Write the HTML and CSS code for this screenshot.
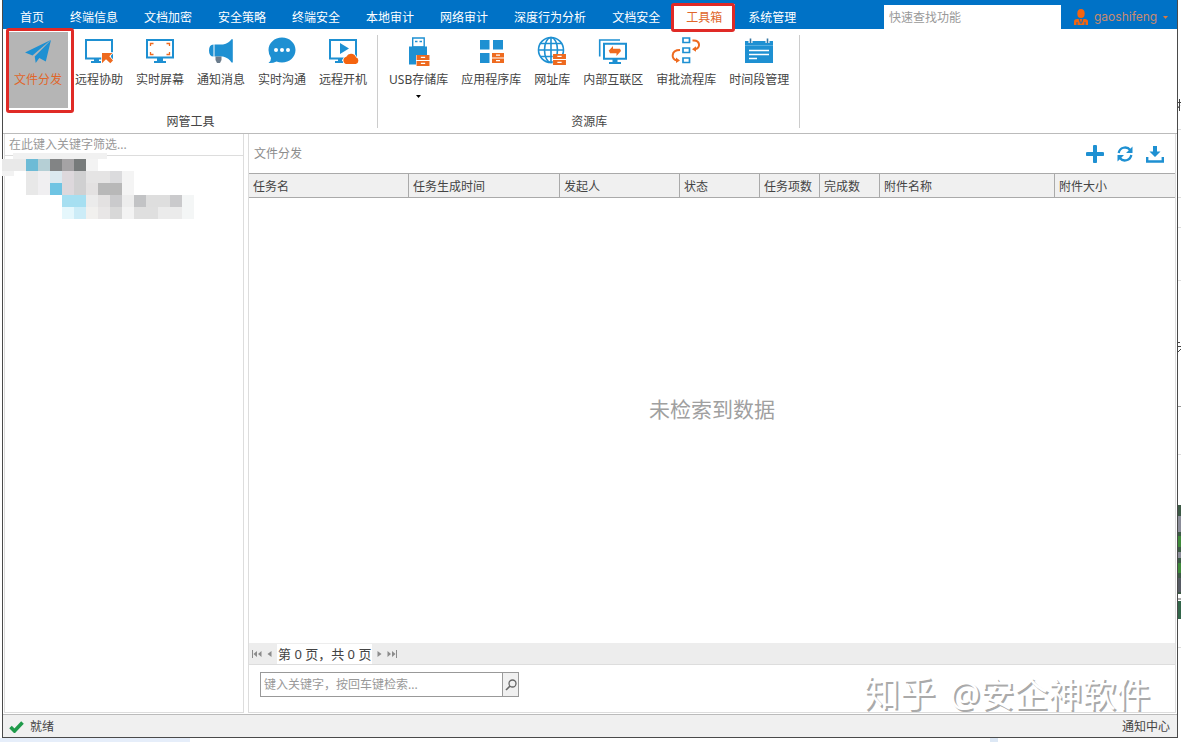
FILE: index.html
```html
<!DOCTYPE html>
<html lang="zh-CN">
<head>
<meta charset="utf-8">
<title>文件分发</title>
<link rel="stylesheet" href="styles.css">
</head>
<body>
<svg width="0" height="0" class="defs" aria-hidden="true">
  <symbol id="drawers" viewBox="0 0 13 10"><path fill="#fff" d="M0 0h13v10H0z"/><path fill="#ee6a1f" d="M.5 0h12v4.500H.5zM.5 5.500h12V10H.5z"/><path fill="#fff" d="M4.500 1.500h4v1.200h-4zM4.500 7h4v1.200h-4z"/></symbol>
</svg>
<div class="window">
  <header class="topbar">
    <nav class="tabs">
      <button class="tab">首页</button>
      <button class="tab">终端信息</button>
      <button class="tab">文档加密</button>
      <button class="tab">安全策略</button>
      <button class="tab">终端安全</button>
      <button class="tab">本地审计</button>
      <button class="tab">网络审计</button>
      <button class="tab">深度行为分析</button>
      <button class="tab">文档安全</button>
      <button class="tab tab-active">工具箱</button>
      <button class="tab">系统管理</button>
    </nav>
    <input class="quick-search" type="text" placeholder="快速查找功能" aria-label="快速查找功能">
    <button class="user">
      <svg width="14" height="16" viewBox="0 0 14 16"><ellipse cx="7" cy="4.500" rx="3.700" ry="4.500" fill="#f5640f"/><path fill="#f5640f" d="M0 16v-3.500q0-2.500 3-2.500h8q3 0 3 2.500V16z"/><path d="M5 9.500l1.500 5M9 9.500l-1.500 5M3 13v3M11 13v3" stroke="#0072c6" fill="none"/></svg>
      <span>gaoshifeng</span>
      <svg width="5" height="3" viewBox="0 0 5 3"><path fill="#d9793f" d="M0 0h5L2.500 3z"/></svg>
    </button>
  </header>

  <section class="ribbon">
    <div class="group">
      <div class="tools">
        <button class="tool tool-active">
          <svg class="icon" viewBox="0 0 30 30"><path fill="#1e90d2" d="M2 16.500L27.700 4 9.500 19.500zM28 4l-5.200 21.500-6.500-3.500-3.600 5-1-6.500z"/></svg>
          <span>文件分发</span>
        </button>
        <button class="tool">
          <svg class="icon" viewBox="0 0 30 30"><path d="M2 4h26v18.500H2z" fill="none" stroke="#1e90d2" stroke-width="2"/><path fill="#1e90d2" d="M10 23h5v2h2v2H7v-2h3z"/><path fill="#ee6a1f" stroke="#fff" stroke-width="1.500" paint-order="stroke" d="M18 17h10.500l-3.200 3.200 3.700 4.300-2.700 2.700-4.300-4-4 4z"/></svg>
          <span>远程协助</span>
        </button>
        <button class="tool">
          <svg class="icon" viewBox="0 0 30 30"><path d="M2 4h26v17.500H2z" fill="none" stroke="#1e90d2" stroke-width="2"/><path fill="#1e90d2" d="M12 22h6v3h3v2H9v-2h3z"/><path d="M5.500 10V7.500h3M21.500 7.500h3V10M24.500 16v2.500h-3M8.500 18.500h-3V16" fill="none" stroke="#ee6a1f" stroke-width="1.300"/></svg>
          <span>实时屏幕</span>
        </button>
        <button class="tool">
          <svg class="icon" viewBox="0 0 30 30"><path fill="#1e90d2" d="M7.500 8.500v12Q3 20.500 3 14.500t4.500-6zM8.500 8.500H17q6-1.500 8.500-5.300h1.300v23.300h-1.300Q23 22 17 20.500H8.500z"/><path fill="#6b7c8c" d="M9.500 20.500h6V24L14 27h-3l-1.500-3z"/></svg>
          <span>通知消息</span>
        </button>
        <button class="tool">
          <svg class="icon" viewBox="0 0 30 30"><path fill="#1e90d2" d="M15 1.500c7.500 0 13.500 5.500 13.500 12.500S22.500 26.500 15 26.500q-3 0-5.500-1-3.500 1.800-8 1.500 2.700-2 2.500-5Q1.500 18.500 1.500 14C1.500 7 7.500 1.500 15 1.500z"/><g fill="#fff"><circle cx="9" cy="14" r="2"/><circle cx="15" cy="14" r="2"/><circle cx="21" cy="14" r="2"/></g></svg>
          <span>实时沟通</span>
        </button>
        <button class="tool">
          <svg class="icon" viewBox="0 0 30 30"><path d="M2 4h26v18.500H2z" fill="none" stroke="#1e90d2" stroke-width="2"/><path fill="#1e90d2" d="M12 7l9 5.500-9 5.500zM10 23h4v2h1v2H7v-2h3z"/><path fill="#f5640f" stroke="#fff" paint-order="stroke" stroke-width="1.500" d="M18 28a3.800 3.800 0 0 1 .3-7.300 5.300 5.300 0 0 1 9.700.6 3.500 3.500 0 0 1-.2 6.700z"/></svg>
          <span>远程开机</span>
        </button>
      </div>
      <div class="group-name">网管工具</div>
    </div>
    <div class="group">
      <div class="tools">
        <button class="tool">
          <svg class="icon" viewBox="0 0 30 30"><path d="M8.700 2h11.500v9H8.700z" fill="#fff" stroke="#1e90d2" stroke-width="1.400"/><path d="M11 5.500h2.500M15.500 5.500H18" stroke="#1e90d2" stroke-width="1.300"/><path fill="#1e90d2" d="M5 10.500h18v18H5z"/><use href="#drawers" x="12" y="19" width="14" height="11"/></svg>
          <span>USB存储库</span>
          <svg class="drop" viewBox="0 0 5 3"><path d="M0 0h5L2.500 3z"/></svg>
        </button>
        <button class="tool">
          <svg class="icon" viewBox="0 0 30 30"><path fill="#1e90d2" d="M4 4h9.500v9.500H4zM17 4h10v9.500H17zM4 17h9.500v10H4z"/><use href="#drawers" x="15.500" y="17" width="13" height="10"/></svg>
          <span>应用程序库</span>
        </button>
        <button class="tool">
          <svg class="icon" viewBox="0 0 30 30"><g fill="none" stroke="#1e90d2" stroke-width="1.600"><circle cx="14" cy="14" r="12.500"/><ellipse cx="14" cy="14" rx="6.500" ry="12.500"/><path d="M14 1.500v25M1.500 14h25M3.500 7.500h21M3.500 20.500h21"/></g><use href="#drawers" x="15.500" y="18" width="14" height="11"/></svg>
          <span>网址库</span>
        </button>
        <button class="tool">
          <svg class="icon" viewBox="0 0 30 30"><path d="M1.700 20.500V4H22" fill="none" stroke="#1e90d2" stroke-width="1.600"/><path d="M6 7.700h22v15H6z" fill="#fff" stroke="#1e90d2" stroke-width="2"/><path fill="#1e90d2" d="M14.500 23h5v3h3.500v2H11v-2h3.500z"/><path fill="#ee6a1f" d="M15 10v2.800h7l1 2.200H10.500zM18.500 20v-2.800H12L11 15h12z"/></svg>
          <span>内部互联区</span>
        </button>
        <button class="tool">
          <svg class="icon" viewBox="0 0 30 30"><path d="M12 2h6.500v4.500H12zM12 12h6.500v4.500H12zM12 22h6.500v4.500H12z" fill="#fff" stroke="#1e90d2" stroke-width="1.700"/><path d="M21.500 4.500c8-1 8.500 8 2.500 8.800M9 14c-9.500 0-9 10-3 10.500" fill="none" stroke="#ee6a1f" stroke-width="2"/><path fill="#ee6a1f" d="M21 13.300l4-3v5.500zM9 24.500l-4-3v5.500z"/></svg>
          <span>审批流程库</span>
        </button>
        <button class="tool">
          <svg class="icon" viewBox="0 0 30 30"><path fill="#1e90d2" d="M1 5h28v22H1z"/><path d="M1 9.500h28" stroke="#57aee0"/><path d="M6.500 3v4M23.500 3v4" stroke="#fff" stroke-width="4"/><path d="M6.500 2.500V7M23.500 2.500V7" stroke="#3777a3" stroke-width="1.600"/><path d="M5 14.500h20M5 18.500h20M5 22.500h8" stroke="#fff" stroke-width="1.600"/></svg>
          <span>时间段管理</span>
        </button>
      </div>
      <div class="group-name">资源库</div>
    </div>
  </section>

  <main class="content">
    <aside class="side">
      <input class="filter" type="text" placeholder="在此键入关键字筛选..." aria-label="在此键入关键字筛选">
    </aside>
    <section class="panel">
      <div class="panel-head">
        <h1>文件分发</h1>
        <div class="actions">
          <button aria-label="新建"><svg viewBox="0 0 18 18"><path d="M9 1.500v15M1.500 9h15" stroke="#1e90d2" stroke-width="4" stroke-linecap="round"/></svg></button>
          <button aria-label="刷新"><svg viewBox="0 0 18 18"><path d="M2.700 8a6.500 6.500 0 0 1 11.500-3M15.300 10a6.500 6.500 0 0 1-11.500 3" fill="none" stroke="#1e90d2" stroke-width="2.300"/><path fill="#1e90d2" d="M16.500 1.500V8H10zM1.500 16.500V10H8z"/></svg></button>
          <button aria-label="下载"><svg viewBox="0 0 18 18"><path fill="#1e90d2" d="M7 1h4v5.500h3.500L9 12 3.500 6.500H7z"/><path d="M1.200 12v4.500h15.600V12" fill="none" stroke="#1e90d2" stroke-width="2.400"/></svg></button>
        </div>
      </div>
      <table class="grid">
        <colgroup><col class="c160"><col class="c151"><col class="c120"><col class="c80"><col class="c60"><col class="c60"><col class="c175"><col></colgroup>
        <thead><tr><th>任务名</th><th>任务生成时间</th><th>发起人</th><th>状态</th><th>任务项数</th><th>完成数</th><th>附件名称</th><th>附件大小</th></tr></thead>
      </table>
      <div class="empty">未检索到数据</div>
      <div class="pager">
        <button aria-label="首页"><svg width="10" height="8" viewBox="0 0 10 8"><path fill="#8c8c8c" d="M0 0h1v8H0zM5 1v6L1.500 4zM9.500 1v6L6 4z"/></svg></button>
        <button aria-label="上一页"><svg width="5" height="8" viewBox="0 0 5 8"><path fill="#8c8c8c" d="M4.500 1v6L.5 4z"/></svg></button>
        <span class="page-text">第 0 页，共 0 页</span>
        <button aria-label="下一页"><svg width="5" height="8" viewBox="0 0 5 8"><path fill="#8c8c8c" d="M.5 1v6l4-3z"/></svg></button>
        <button aria-label="末页"><svg width="10" height="8" viewBox="0 0 10 8"><path fill="#8c8c8c" d="M9 0h1v8H9zM.5 1v6L4 4zM5 1v6l3.500-3z"/></svg></button>
      </div>
      <form class="find">
        <input type="text" placeholder="键入关键字，按回车键检索..." aria-label="键入关键字检索">
        <button type="button" aria-label="检索"><svg width="12" height="12" viewBox="0 0 12 12"><circle cx="7.500" cy="4.500" r="3.500" fill="none" stroke="#666" stroke-width="1.300"/><path d="M5 7L1 11" stroke="#666" stroke-width="1.600"/></svg></button>
      </form>
    </section>
  </main>

  <footer class="status">
    <span class="ready"><svg width="15" height="12" viewBox="0 0 15 12"><path d="M1.500 6l4 4 8-8.500" fill="none" stroke="#1f9a4a" stroke-width="3.600"/></svg>就绪</span>
    <button class="notify">通知中心</button>
  </footer>
</div>

<svg class="mosaic" width="196" height="66" viewBox="0 0 196 66" aria-hidden="true">
  <path fill="#f1f1f1" d="M13 0h94v6H13z"/><path fill="#e9e9e9" d="M2 6h24v12H2z"/><path fill="#f2f2f2" d="M2 18h12v5H2z"/>
  <path fill="#6dbbd6" d="M26 6h12v12H26z"/><path fill="#b5cfd5" d="M38 6h12v12H38z"/><path fill="#828485" d="M50 6h12v12H50z"/><path fill="#a5a3a5" d="M62 6h12v12H62z"/><path fill="#777b7b" d="M74 6h12v12H74z"/><path fill="#f3f3f3" d="M86 6h12v12H86z"/>
  <path fill="#e8e8e8" d="M26 18h12v24H26z"/><path fill="#f0eff1" d="M38 18h12v24H38z"/><path fill="#dbe9f0" d="M50 18h12v12H50z"/><path fill="#ddd8dc" d="M62 18h12v24H62z"/><path fill="#d0d0d1" d="M74 18h12v24H74z"/><path fill="#e5e4e4" d="M86 18h24v12H86z"/><path fill="#dbdbdd" d="M110 18h12v12h-12z"/><path fill="#f4f4f4" d="M122 18h12v24h-12z"/>
  <path fill="#6fc4e3" d="M50 30h12v12H50z"/><path fill="#e3e1e1" d="M86 30h12v12H86z"/><path fill="#b8b8b8" d="M98 30h24v12H98z"/>
  <path fill="#a6dff1" d="M62 42h24v12H62z"/><path fill="#ebebeb" d="M86 42h12v12H86z"/><path fill="#e3e1e1" d="M98 42h12v12H98z"/><path fill="#cacacc" d="M110 42h12v12h-12zM170 42h12v12h-12z"/><path fill="#ededed" d="M122 42h12v12h-12z"/><path fill="#c2c3c5" d="M134 42h12v12h-12z"/><path fill="#dedede" d="M146 42h24v12h-24z"/><path fill="#f4f6f6" d="M182 42h12v24h-12z"/>
  <path fill="#e5f7fc" d="M62 54h12v12H62z"/><path fill="#ccecf7" d="M74 54h12v12H74z"/><path fill="#f1f0ee" d="M86 54h12v12H86z"/><path fill="#e8e6e6" d="M98 54h12v12H98z"/><path fill="#d8d8d8" d="M110 54h12v12h-12z"/><path fill="#f3f3f3" d="M122 54h12v12h-12z"/><path fill="#dfdfdf" d="M134 54h24v12h-24z"/><path fill="#ebebeb" d="M158 54h24v12h-24z"/>
</svg>
<svg class="behind" width="3" height="742" viewBox="0 0 3 742" aria-hidden="true">
  <path stroke="#444" fill="none" d="M0 102.500h3M1.500 99v12M0 108l2-3M0 342.500h2M0 346.500h3M0 352l3-3"/>
  <path fill="#ddd" d="M0 129h3v1H0zM0 197h3v1H0zM0 227h3v1H0zM0 280h3v1H0zM0 454h3v1H0zM0 647h3v1H0z"/><path fill="#999" d="M0 406h3v1H0z"/>
  <path fill="#3d5a46" d="M0 505h3v89H0z"/><path fill="#8b8d99" d="M0 516h3v16H0zM0 552h3v6H0z"/><path fill="#3f8a3a" d="M0 536h3v11H0zM0 563h3v10H0z"/><path fill="#565a63" d="M0 578h3v14H0z"/><path fill="#aaa" d="M0 598h3v2H0z"/><path fill="#33664a" d="M0 601h3v18H0z"/>
</svg>
<div class="watermark"><span class="brand">知乎</span><span>@安企神软件</span></div>
</body>
</html>
```
FILE: styles.css
```css
* { box-sizing: border-box; }

body {
  position: relative;
  display: flex;
  flex-direction: column;
  height: 100vh;
  margin: 0;
  padding: 0 3px 4px 2px;
  overflow: hidden;
  background:
    linear-gradient(#e6eefa, #e6eefa) 0 100% / 190px 4px no-repeat,
    linear-gradient(#dde8f5, #dde8f5) 990px 100% / 8px 4px no-repeat,
    #fff;
  color: #444;
  font: 12px/16px "Noto Sans", "Noto Sans CJK SC", sans-serif;
}

button, input {
  margin: 0;
  padding: 0;
  border: 0;
  border-radius: 0;
  background: none;
  color: inherit;
  font: inherit;
  outline: 0;
}

input::placeholder { color: #999; opacity: 1; }
svg { display: block; }
.defs { position: absolute; }

.window {
  flex: 1;
  display: flex;
  flex-direction: column;
  min-height: 0;
  border: 1px solid #4a4a4a;
  border-top: 0;
  background: #fff;
}

/* top bar */
.topbar {
  display: flex;
  align-items: flex-end;
  height: 29px;
  background: #0072c6;
}

.tabs { flex: 1; display: flex; padding-left: 4px; }

.tab {
  position: relative;
  height: 25px;
  padding: 2px 13px 0;
  color: #fff;
  white-space: nowrap;
}

.tab-active { background: #fff; color: #e0662a; }

.tab-active::after {
  content: "";
  position: absolute;
  inset: -1px 0 -3px -2px;
  border: 3px solid #e02a26;
  border-radius: 3px;
}

.quick-search {
  width: 177px;
  height: 24px;
  padding: 0 5px;
  background: #fff;
}

.user {
  display: flex;
  align-items: center;
  gap: 6px;
  width: 116px;
  height: 24px;
  padding-left: 13px;
  color: #c88a70;
  font: 12px/16px Inter, sans-serif;
}

/* ribbon */
.ribbon {
  display: flex;
  height: 105px;
  border-bottom: 1px solid #bbb;
}

.group {
  position: relative;
  display: flex;
  flex-direction: column;
  padding: 3px 5px 0 5px;
}

.group::after {
  content: "";
  position: absolute;
  top: 6px;
  right: 0;
  bottom: 5px;
  border-right: 1px solid #ccc;
}

.tools { display: flex; gap: 1px; }

.tool {
  position: relative;
  display: flex;
  flex-direction: column;
  align-items: center;
  height: 76px;
  padding: 4px 6px 0;
  white-space: nowrap;
}

.tool .icon { width: 30px; height: 30px; margin-bottom: 6px; overflow: visible; }
.drop { width: 5px; height: 3px; margin-top: 7px; }
.tool-active { background: #b5b5b5; color: #e0662a; }

.tool-active::after {
  content: "";
  position: absolute;
  inset: -4px -6px -5px -2px;
  border: 3px solid #e02a26;
  border-radius: 3px;
}

.group-name { margin-top: 6px; text-align: center; }

/* work area */
.content {
  flex: 1;
  display: flex;
  gap: 4px;
  min-height: 0;
  padding: 0 1px 1px 1px;
}

.side {
  width: 240px;
  border: 1px solid #ddd;
  border-top: 0;
}

.filter {
  display: block;
  width: 100%;
  height: 22px;
  padding: 0 4px;
  border-bottom: 1px solid #ddd;
}

.panel {
  flex: 1;
  display: flex;
  flex-direction: column;
  min-width: 0;
  border: 1px solid #ddd;
  border-top: 0;
}

.panel-head {
  display: flex;
  align-items: center;
  justify-content: space-between;
  height: 39px;
  padding: 0 11px 0 5px;
}

.panel-head h1 { margin: 0; color: #8c8c8c; font: inherit; }
.actions { display: flex; gap: 12px; }
.actions svg { width: 18px; height: 18px; }

.grid {
  width: 100%;
  border-collapse: separate;
  border-spacing: 0;
  table-layout: fixed;
}

.grid th {
  height: 25px;
  padding: 2px 0 0 4px;
  border: 1px solid #aaa;
  border-width: 1px 1px 1px 0;
  background: #f0f0f0;
  font-weight: 400;
  text-align: left;
  white-space: nowrap;
}
.grid th:last-child { border-right: 0; }

.c160 { width: 160px; }
.c151 { width: 151px; }
.c120 { width: 120px; }
.c80 { width: 80px; }
.c60 { width: 60px; }
.c175 { width: 175px; }

.empty {
  flex: 1;
  display: flex;
  align-items: center;
  justify-content: center;
  padding-bottom: 24px;
  color: #a0a0a0;
  font-size: 21px;
  line-height: 28px;
}

.pager {
  display: flex;
  align-items: center;
  gap: 5px;
  height: 22px;
  padding-left: 3px;
  border-bottom: 1px solid #ddd;
  background: #ededed;
}

.page-text {
  padding: 0 1px;
  background: #fff;
  font-size: 13px;
  line-height: 20px;
}

.find {
  display: flex;
  width: 259px;
  height: 25px;
  margin: 7px 0 15px 11px;
  border: 1px solid #999;
}

.find input { flex: 1; min-width: 0; padding: 0 3px; }

.find button {
  display: grid;
  place-items: center;
  width: 16px;
  border-left: 1px solid #999;
  background: #f0f0f0;
}

.status {
  display: flex;
  align-items: center;
  justify-content: space-between;
  height: 23px;
  padding: 2px 7px 0 6px;
  border-top: 1px solid #bbb;
  background: #f0f0f0;
}

.ready { display: flex; align-items: center; gap: 6px; }

/* overlays */
.mosaic { position: absolute; left: 0; top: 153px; }
.behind { position: absolute; right: 0; top: 0; }

.watermark {
  position: absolute;
  right: 31px;
  bottom: 26px;
  display: flex;
  align-items: center;
  gap: 14px;
  color: #fff;
  font-size: 34px;
  line-height: 44px;
  text-shadow: 2px 2px 0 #aaa;
  white-space: nowrap;
  pointer-events: none;
}
.brand { font-size: 36px; }
```
